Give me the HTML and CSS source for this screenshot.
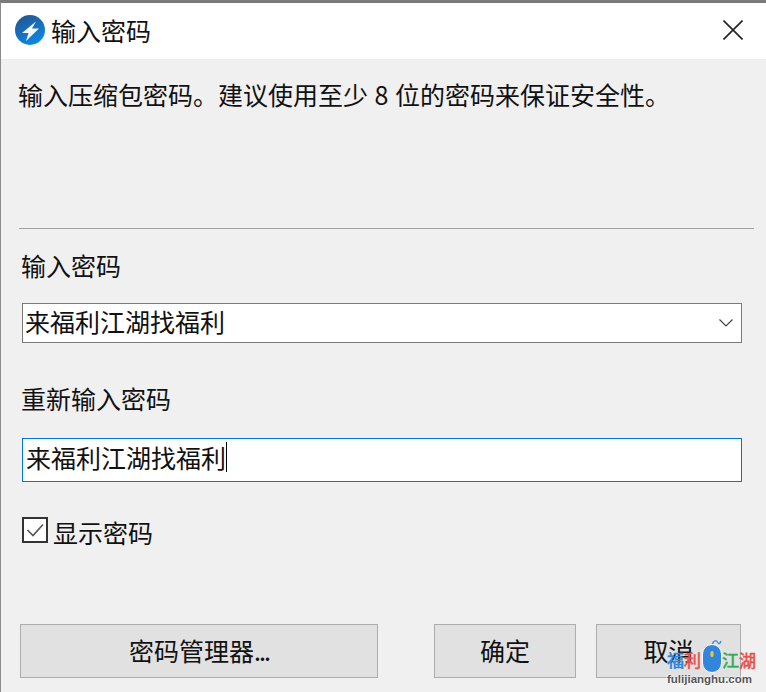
FILE: index.html
```html
<!DOCTYPE html>
<html lang="zh-CN">
<head>
  <meta charset="UTF-8">
  <title>输入密码</title>
  <link rel="stylesheet" href="styles.css">
</head>
<body>
  <div class="dialog">
    <div class="titlebar">
      <svg class="app-icon" width="30" height="30" viewBox="0 0 30 30">
        <defs>
          <linearGradient id="appBlue" x1="0.2" y1="0" x2="0.7" y2="1">
            <stop offset="0" stop-color="#24558f"/>
            <stop offset="1" stop-color="#0a8ae8"/>
          </linearGradient>
        </defs>
        <circle cx="15" cy="15" r="15" fill="url(#appBlue)"/>
        <path d="M21 6.5 L7 18 L13.5 18 L11 26 L24 13.5 L17 13.5 Z" fill="#f2f7fd"/>
      </svg>
      <span class="title">输入密码</span>
      <svg class="close" width="20" height="20" viewBox="0 0 20 20">
        <path d="M0.5 0.5 L19.5 19.5 M19.5 0.5 L0.5 19.5" stroke="#222" stroke-width="1.6" fill="none"/>
      </svg>
    </div>

    <div class="content">
      <p class="desc">输入压缩包密码。建议使用至少 8 位的密码来保证安全性。</p>
      <hr class="divider">

      <label class="field-label label-first">输入密码</label>
      <div class="combo">
        <span>来福利江湖找福利</span>
        <svg width="14" height="8" viewBox="0 0 14 8">
          <path d="M0.5 0.5 L7 7 L13.5 0.5" stroke="#444" stroke-width="1.2" fill="none"/>
        </svg>
      </div>

      <label class="field-label label-second">重新输入密码</label>
      <div class="textbox">
        <span>来福利江湖找福利</span><i class="caret"></i>
      </div>

      <div class="show-row">
        <span class="checkbox">
          <svg width="20" height="16" viewBox="0 0 20 16">
            <path d="M2.5 8 L8 13.5 L18 2.5" stroke="#555" stroke-width="1.6" fill="none"/>
          </svg>
        </span>
        <span>显示密码</span>
      </div>

      <div class="buttons">
        <button class="btn btn-manager">密码管理器<span class="dots">...</span></button>
        <button class="btn btn-ok">确定</button>
        <button class="btn btn-cancel">取消</button>
      </div>
    </div>
  </div>

  <!-- watermark sits over the cancel button -->
  <div class="watermark">
    <div class="wm-top">
      <span class="wm-blue">福</span><span class="wm-red">利</span>
      <svg class="wm-mouse" width="20" height="34" viewBox="0 0 20 34">
        <path d="M10 8 C10 2 14 0.5 15.5 3 C17 5.5 18 5 19 2" stroke="#3a87d8" stroke-width="1.3" fill="none"/>
        <rect x="0.5" y="5.5" width="19" height="28" rx="9.5" fill="#2f86dc" stroke="#fff" stroke-width="1"/>
        <rect x="8.5" y="12" width="3" height="6" rx="1.5" fill="#f2c531"/>
      </svg>
      <span class="wm-green">江</span><span class="wm-red">湖</span>
    </div>
    <div class="wm-url">fulijianghu.com</div>
  </div>
</body>
</html>
```

FILE: styles.css
```css
* {
  box-sizing: border-box;
}

html, body {
  margin: 0;
  padding: 0;
}

body {
  width: 766px;
  height: 692px;
  overflow: hidden;
  position: relative;
  background: #f0f0f0;
  font-family: "Noto Sans CJK SC", "Liberation Sans", sans-serif;
  color: #111;
}

.dialog {
  height: 692px;
  border-top: 3px solid #7a7a7a;
  border-left: 1px solid #8a8a8a;
  display: flex;
  flex-direction: column;
}

.titlebar {
  height: 56px;
  flex: none;
  background: #fff;
  display: flex;
  align-items: center;
  padding: 0 23px 2px 14px;
}

.app-icon {
  margin-right: 6px;
}

.title {
  font-size: 25px;
  line-height: 30px;
}

.close {
  margin-left: auto;
}

.content {
  flex: 1;
  display: flex;
  flex-direction: column;
  padding: 0 12px 0 18px;
}

.desc {
  margin: 18px 0 0 -1px;
  height: 151px;
  font-size: 25px;
  line-height: 34px;
  word-spacing: 1px;
  white-space: nowrap;
}

.divider {
  margin: 0;
  height: 1px;
  border: none;
  background: #a0a0a0;
}

.field-label {
  display: block;
  margin-left: 2px;
  font-size: 25px;
  line-height: 34px;
}

.label-first {
  margin-top: 19px;
}

.label-second {
  margin-top: 38px;
}

.combo,
.textbox {
  margin-left: 3px;
  width: 720px;
  background: #fff;
  display: flex;
  align-items: center;
  padding-left: 2px;
  font-size: 25px;
}

.combo {
  margin-top: 21px;
  height: 40px;
  border: 1px solid #7a7a7a;
  justify-content: space-between;
  padding-right: 8px;
  padding-bottom: 4px;
}

.combo svg {
  margin-top: 4px;
}

.textbox {
  margin-top: 23px;
  height: 44px;
  border: 1px solid #0078d7;
  padding-left: 3px;
  padding-bottom: 6px;
}

.caret {
  width: 1px;
  height: 30px;
  background: #000;
}

.show-row {
  margin: 33px 0 0 3px;
  display: flex;
  align-items: center;
  gap: 5px;
  font-size: 25px;
  line-height: 34px;
}

.checkbox {
  width: 26px;
  height: 26px;
  margin-bottom: 4px;
  border: 2px solid #333;
  background: #fff;
  display: flex;
  align-items: center;
  justify-content: center;
}

.buttons {
  margin: 75px 0 0 1px;
  display: flex;
}

.btn {
  height: 54px;
  padding: 0 0 2px 0;
  background: #e1e1e1;
  border: 1px solid #adadad;
  font-family: inherit;
  font-size: 25px;
  color: #111;
}

.dots {
  letter-spacing: -2px;
}

.btn-manager {
  width: 358px;
}

.btn-ok {
  width: 142px;
  margin-left: 56px;
}

.btn-cancel {
  width: 145px;
  margin-left: 20px;
}

.watermark {
  position: absolute;
  left: 667px;
  top: 650px;
  width: 88px;
}

.wm-top {
  display: flex;
  align-items: flex-start;
  height: 22px;
  font-size: 17px;
  line-height: 19px;
  -webkit-text-stroke: 0.6px currentColor;
}

.wm-mouse {
  flex: none;
  margin: -11px 0 0 1px;
}

.wm-blue {
  color: #2f86dc;
}

.wm-red {
  color: #e8524a;
}

.wm-green {
  color: #36a85a;
}

.wm-url {
  font-family: "Liberation Sans", sans-serif;
  font-weight: 700;
  font-size: 11.5px;
  line-height: 14px;
  color: #555;
  white-space: nowrap;
  text-shadow: 0 0 2px #fff, 0 0 2px #fff;
}
```
